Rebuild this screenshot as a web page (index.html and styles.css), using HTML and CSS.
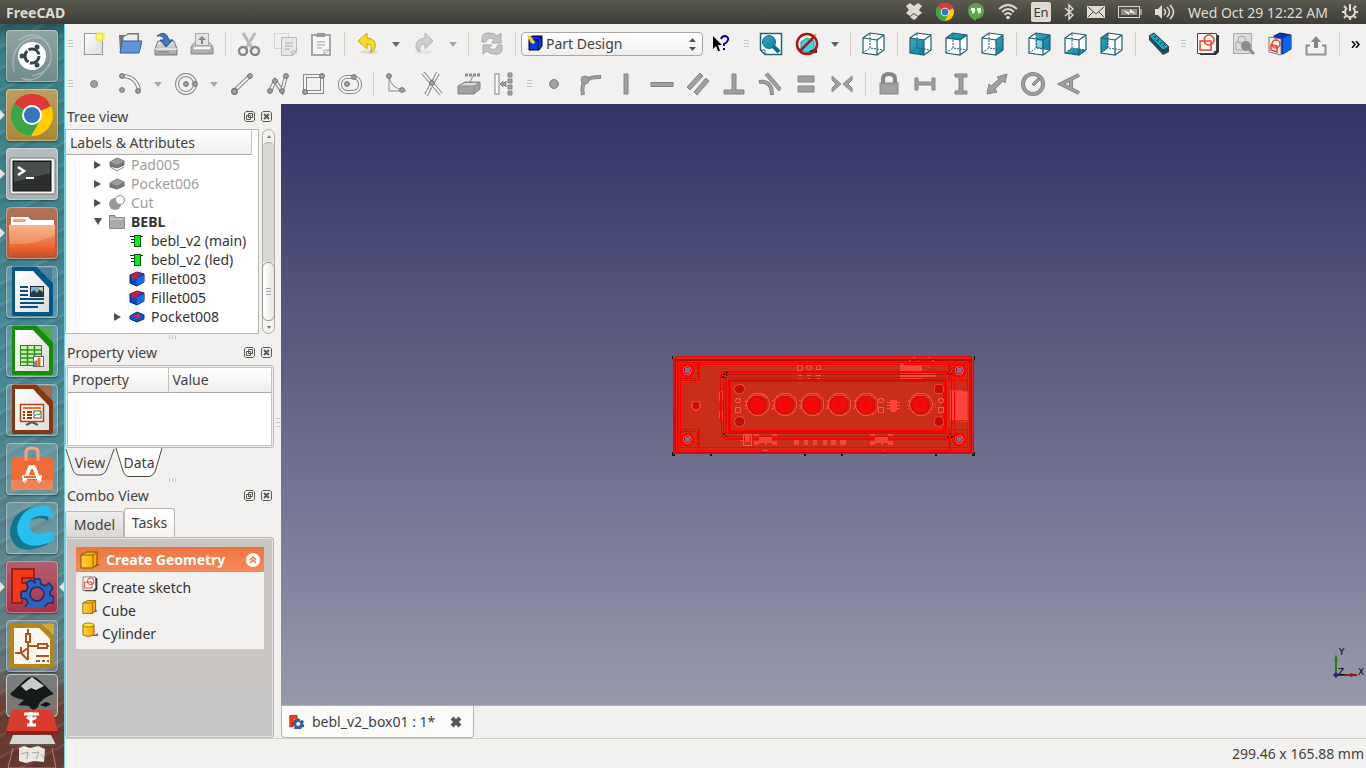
FILE: index.html
```html
<!DOCTYPE html>
<html lang="en">
<head>
<meta charset="utf-8">
<title>FreeCAD</title>
<link rel="stylesheet" href="styles.css">
</head>
<body>
<svg class="defs" aria-hidden="true">
  <defs>
    <linearGradient id="teal" x1="0" y1="0" x2="1" y2="1"><stop offset="0" stop-color="#3fa9c2"/><stop offset="1" stop-color="#067f9c"/></linearGradient>
    <linearGradient id="gold" x1="0" y1="0" x2="1" y2="0"><stop offset="0" stop-color="#ffd83a"/><stop offset="1" stop-color="#f5a300"/></linearGradient>
    <linearGradient id="orange" x1="0" y1="0" x2="0" y2="1"><stop offset="0" stop-color="#f9a878"/><stop offset="1" stop-color="#e2501b"/></linearGradient>
    <linearGradient id="paper" x1="0" y1="0" x2="1" y2="1"><stop offset="0" stop-color="#fff"/><stop offset="1" stop-color="#dcdcdc"/></linearGradient>
    <linearGradient id="drive" x1="0" y1="0" x2="0" y2="1"><stop offset="0" stop-color="#e8e8e8"/><stop offset="1" stop-color="#a2a2a2"/></linearGradient>
    <radialGradient id="ball"><stop offset="0" stop-color="#f00"/><stop offset=".7" stop-color="#f00d0d"/><stop offset="1" stop-color="#d50808"/></radialGradient>
    <symbol id="shell" viewBox="0 0 24 24"><path d="M1 6L8 1L22 3V18L15 23L1 21Z" fill="#fff"/></symbol>
    <symbol id="frame" viewBox="0 0 24 24"><path d="M1 6L15 8V23L1 21ZM8 1L22 3V18M1 6L8 1M15 8L22 3M15 23L22 18" fill="none" stroke="#1f6070" stroke-width="1.2"/><path d="M8 2V16L22 18M1 21L8 16" fill="none" stroke="#1f6070" stroke-dasharray="2 1"/></symbol>
    <symbol id="dot" viewBox="0 0 6 6"><circle cx="3" cy="3" r="2.4" fill="#a2a2a2" stroke="#6e6e6e"/></symbol>
    <symbol id="chrome" viewBox="0 0 42 42"><circle cx="21" cy="21" r="21" fill="#fc0"/><path d="M21 21L3 10A21 21 0 0 1 40 12Z" fill="#df3a35"/><path d="M3 10A21 21 0 0 0 20 42L30 25 21 21Z" fill="#3ba648"/><circle cx="21" cy="21" r="10" fill="#fff"/><circle cx="21" cy="21" r="8" fill="#3577bd"/></symbol>
    <symbol id="sketch" viewBox="0 0 24 24"><path d="M4 3H23V20L20 23H4Z" fill="#333"/><path d="M1.500 1.500H20.500V18L17 21.500H1.500Z" fill="#fff" stroke="#444"/><rect x="4" y="9" width="11" height="9" fill="none" stroke="#f43a20" stroke-width="1.500"/><circle cx="13" cy="8" r="5" fill="none" stroke="#f43a20" stroke-width="1.500"/></symbol>
    <symbol id="fc" viewBox="0 0 44 40"><path d="M2 2H24V11H12V16H20V24H12V36H2Z" fill="#f23b14" stroke="#8d170b" stroke-width="1.500"/><path fill-rule="evenodd" d="M24 12h6l1 5 4 2 4-3 4 5-3 4 0 3 4 2-1 6-5 0-3 3 1 5-6 1-3-4h-4l-4 3-4-4 3-4-2-4-5-1v-6l5-1 2-4-2-4 5-3 4 3ZM27 20A7 7 0 1 0 27 34A7 7 0 1 0 27 20Z" fill="#2d63bd" stroke="#12306e" stroke-width="1.500"/></symbol>
    <symbol id="float" viewBox="0 0 11 11"><path d="M2 .500H9L10.500 2V9L9 10.500H2L.500 9V2ZM4.500 2.500H8.500V6.500H4.500ZM2.500 4.500H6.500V8.500H2.500Z" fill="none" stroke="#5b5a57"/></symbol>
    <symbol id="shut" viewBox="0 0 11 11"><path d="M2 .500H9L10.500 2V9L9 10.500H2L.500 9V2Z" fill="none" stroke="#5b5a57"/><path d="M3 3L8 8M8 3L3 8" stroke="#5b5a57" stroke-width="2"/></symbol>
    <symbol id="box" viewBox="0 0 20 18"><path d="M12 17L20 14L16 12Z" fill="#666"/><path d="M1 4L7 1H17V13L13 17H1Z" fill="url(#gold)" stroke="#7c5500"/><path d="M1 4H13V17M13 4L17 1" fill="none" stroke="#8b6100"/></symbol>
    <symbol id="fillet" viewBox="0 0 16 16"><path d="M1 4L8 1L15 3V11L8 15L1 12Z" fill="#0647c8" stroke="#092064"/><path d="M8 7L15 4V11L8 15Z" fill="#1668ee"/><path d="M2 4L8 1L13 3Q8 4 8 8L2 7Z" fill="#d41d29"/></symbol>
    <symbol id="chip" viewBox="0 0 16 16"><path d="M1 3.500H6M2 6.500H6M2 9.500H6M10 3.500H14" stroke="#222"/><rect x="5.500" y="2.500" width="6" height="11" fill="#00f316" stroke="#174d18"/></symbol>
    <symbol id="slab" viewBox="0 0 16 16"><path d="M1 7L8 3L15 6V10L8 13L1 11Z" fill="#777" stroke="#6b6b6b"/><path d="M1 7L8 10L15 6L8 3Z" fill="#999"/></symbol>
    <symbol id="sheen" viewBox="0 0 52 52"><rect x=".500" y=".500" width="51" height="51" rx="4" fill="none" stroke="#fff" stroke-opacity=".35"/></symbol>
    <symbol id="doc" viewBox="0 0 52 52"><path d="M8 2H29L45 18V48H8Z" fill="currentColor" stroke="currentColor" stroke-width="4" stroke-linejoin="round"/><path d="M9 5H27L43 22V46H9Z" fill="url(#paper)"/><path d="M32 2H46V16Z" fill="currentColor"/><path d="M32 2H46V16Z" fill="#fff" opacity=".25"/></symbol>
    <symbol id="hole" viewBox="0 0 48 48"><circle cx="24" cy="24" r="18" fill="#be1b17" stroke="#f00" stroke-width="6"/><circle cx="24" cy="24" r="12" fill="none" stroke="#ff4b45" stroke-width="3"/><rect x="16" y="16" width="16" height="16" fill="#7570a0"/></symbol>
    <symbol id="led" viewBox="0 0 80 80"><circle cx="40" cy="40" r="34" fill="none" stroke="#ff4a42" stroke-width="3"/><path d="M18 12H62M16 18H64" stroke="#ff352e" stroke-width="3"/><circle cx="38" cy="42" r="28" fill="url(#ball)"/><path d="M0 28L5 32M0 42H5M0 55L5 50" stroke="#ff5650" stroke-width="3"/></symbol>
  </defs>
</svg>

<header class="panel">
  <span class="app-name">FreeCAD</span>
  <div class="tray">
    <svg class="i18" viewBox="0 0 18 18"><path d="M1 3L5 0L9 3L13 0L17 3L14 7L17 10L13 13L9 10L5 13L1 10L4 7Z M5 14L9 11L13 14L9 17Z" fill="#dfdbd2"/></svg>
    <svg class="i18"><use href="#chrome"/></svg>
    <svg class="i18" viewBox="0 0 18 18"><path d="M9 0A8 8 0 0 1 9 16L9 18Q1 14 1 8A8 8 0 0 1 9 0Z" fill="#58a846"/><path d="M4 5H8V9L5 11V8H4ZM10 5H14V9L11 11V8H10Z" fill="#fff"/></svg>
    <svg class="i20" viewBox="0 0 20 16"><path d="M1 5Q10-3 19 5M4 8Q10 2 16 8M6.500 11Q10 7 13.500 11" fill="none" stroke="#dfdbd2" stroke-width="1.800"/><circle cx="10" cy="13.500" r="1.800" fill="#dfdbd2"/></svg>
    <span class="lang">En</span>
    <svg class="i10" viewBox="0 0 10 18"><path d="M1 5L9 12L5 16V2L9 6L1 13" fill="none" stroke="#dfdbd2" stroke-width="1.500"/></svg>
    <svg class="i18" viewBox="0 0 18 12"><rect width="18" height="12" fill="#dfdbd2"/><path d="M1 1L9 8L17 1M1 11L6 6M17 11L12 6" fill="none" stroke="#4b4a45"/></svg>
    <svg class="i24" viewBox="0 0 24 12"><path d="M.500 .500H21.500V11.500H.500ZM23 3V9" fill="none" stroke="#dfdbd2"/><path d="M3 3H19V9H3Z" fill="#8f8d86"/><path d="M5 4L12 7L12 3L18 8L11 6L11 9Z" fill="#fff"/></svg>
    <svg class="i20" viewBox="0 0 20 16"><path d="M0 5H3L7 1V15L3 11H0Z" fill="#dfdbd2"/><path d="M9 5Q12 8 9 11M12 3Q17 8 12 13M15 1Q22 8 15 15" fill="none" stroke="#dfdbd2" stroke-width="1.500"/></svg>
    <time class="clock">Wed Oct 29 12:22 AM</time>
    <svg class="i18" viewBox="0 0 18 18"><path d="M9 1V8M9 14V17M1 9H4M14 9H17M3 3L5 5M15 3L13 5M3 15L5 13M15 15L13 13" stroke="#dfdbd2" stroke-width="2.200"/><path d="M6 5A5 5 0 1 0 12 5" fill="none" stroke="#dfdbd2" stroke-width="2"/></svg>
  </div>
</header>

<div class="desktop">
<nav class="launcher" aria-label="Launcher">
  <button class="tile dash" aria-label="Dash"><svg viewBox="0 0 52 52"><path d="M8 42Q3 16 25 8Q43 5 45 25Q46 42 26 46M15 48Q34 56 45 30M13 10Q31-2 42 15" fill="none" stroke="#c4d4d4" stroke-opacity=".5" stroke-width="1.500"/><circle cx="26" cy="26" r="14" fill="#fff"/><circle cx="26" cy="26" r="7" fill="none" stroke="#34464a" stroke-width="3" stroke-dasharray="13 1.600"/><circle cx="16" cy="26" r="2.500" fill="#34464a"/><circle cx="31" cy="17" r="2.500" fill="#34464a"/><circle cx="31" cy="35" r="2.500" fill="#34464a"/><use href="#sheen"/></svg></button>
  <button class="tile gold run" aria-label="Chrome"><svg viewBox="0 0 52 52"><use href="#chrome" x="5" y="5" width="42" height="42"/><use href="#sheen"/></svg></button>
  <button class="tile silver run" aria-label="Terminal"><svg viewBox="0 0 52 52"><rect x="4" y="10" width="45" height="36" rx="2" fill="#f3f3f3" stroke="#777"/><rect x="7" y="13" width="38" height="30" fill="#2d2f2f" stroke="#111"/><path d="M8 14H44V25L8 34Z" fill="#4b4e4e"/><path d="M12 19L18 23L12 27" fill="none" stroke="#fff" stroke-width="2.500"/><path d="M20 30H28" stroke="#fff" stroke-width="2"/><use href="#sheen"/></svg></button>
  <button class="tile rust run" aria-label="Files"><svg viewBox="0 0 52 52"><path d="M5 10H22L25 13H48V46H4Z" fill="#fff"/><rect x="7" y="12" width="13" height="3" fill="#f5a47b"/><path d="M3 18H49V44Q49 47 46 47H6Q3 47 3 44Z" fill="url(#orange)"/><path d="M3 18H49V28Q28 39 4 37Z" fill="#fbd1ab" opacity=".3"/><use href="#sheen"/></svg></button>
  <button class="tile writer" aria-label="Writer"><svg viewBox="0 0 52 52"><use href="#doc"/><path d="M14 21H22M14 25H22M14 29H22M14 33H38M14 37H38M14 41H32" stroke="#0a4f80" stroke-width="2"/><rect x="24.500" y="20.500" width="13" height="10" fill="#73b3d4" stroke="#234"/><path d="M25 30V27L28 24L31 27L34 23L38 28V30Z" fill="#263746"/><circle cx="35" cy="23" r="1.500" fill="#fd4"/><use href="#sheen"/></svg></button>
  <button class="tile calc" aria-label="Calc"><svg viewBox="0 0 52 52"><use href="#doc"/><rect x="14.500" y="20.500" width="21" height="20" fill="#c7f3ad" stroke="#238a14"/><path d="M14 25H36M14 29H36M14 33H36M14 37H36M21.500 20V41M28.500 20V41" stroke="#299018" stroke-width="1.500"/><rect x="27.500" y="31.500" width="10" height="10" fill="#fff" stroke="#666"/><path d="M29 41V36H31V41M32 41V33H34V41" fill="#ed6b23" stroke="#ed6b23"/><path d="M29 41V37" stroke="#28a4df" stroke-width="2"/><use href="#sheen"/></svg></button>
  <button class="tile impress" aria-label="Impress"><svg viewBox="0 0 52 52"><use href="#doc"/><path d="M20 41L26 38L32 41" fill="none" stroke="#555" stroke-width="2"/><rect x="14.500" y="20.500" width="23" height="17" fill="#fff2e8" stroke="#ad4411" stroke-width="1.500"/><path d="M17 24H35" stroke="#d8763e" stroke-width="2"/><path d="M17 28H19M17 31H19M17 34H19M21 28H26M21 31H26M21 34H26" stroke="#853910" stroke-width="2"/><rect x="28" y="27" width="7" height="7" fill="#fff" stroke="#555"/><path d="M29 32L31 30L33 31L35 28" fill="none" stroke="#2b9b3a"/><use href="#sheen"/></svg></button>
  <button class="tile store" aria-label="Software Center"><svg viewBox="0 0 52 52"><path d="M5 14H47V44Q47 47 44 47H8Q5 47 5 44Z" fill="#ee6b36"/><path d="M5 37H47V47H5Z" fill="#f28355"/><path d="M20 18V9Q20 5 26 5Q32 5 32 9V18" fill="none" stroke="#f9a27d" stroke-width="3"/><path d="M18 39L24 24H28L34 39M16 34H36" fill="none" stroke="#fff" stroke-width="3.500"/><path d="M18 34H30" stroke="#ee6b36" stroke-width="2"/><use href="#sheen"/></svg></button>
  <button class="tile" aria-label="Cura"><svg viewBox="0 0 52 52"><path d="M43 7Q23 0 9 15Q-1 30 9 43Q18 53 42 42L37 34Q22 38 19 30Q17 20 28 17Q36 14 42 19Z" fill="#12778d"/><path d="M44 5Q24 1 15 15Q7 28 16 39Q26 49 49 38L46 29Q30 36 25 28Q20 17 32 14Q40 12 48 17Z" fill="#25bff0"/><use href="#sheen"/></svg></button>
  <button class="tile crimson run active" aria-label="FreeCAD"><svg viewBox="0 0 52 52"><use href="#fc" x="4" y="6" width="44" height="40"/><use href="#sheen"/></svg></button>
  <button class="tile" aria-label="Schematic"><svg viewBox="0 0 52 52"><path d="M6 6H34L46 18V46H6Z" fill="#fbf8ef" stroke="#b58617" stroke-width="4"/><path d="M36 4H48V16Z" fill="#d6a826"/><path d="M22 9V40M15 33V27M22 28L15 33H9M15 33L22 40M22 26H43" fill="none" stroke="#b5521d" stroke-width="2"/><path d="M20 14H24V22H20ZM32 24H41V28H32Z" fill="#fff" stroke="#b5521d" stroke-width="2"/><path d="M30 36H43M30 41H34M36 41H39M41 41H43" stroke="#a55831" stroke-width="2"/><use href="#sheen"/></svg></button>
  <svg class="stack" viewBox="0 0 52 94" preserveAspectRatio="xMidYMin slice"><rect x=".500" y=".500" width="51" height="42" rx="4" fill="#7d8787" fill-opacity=".75" stroke="#c6cecb"/><path d="M4 20L20 5Q26 0 32 5L48 20Q34 24 32 33Q27 39 23 32L12 31L18 26Q8 24 4 20Z" fill="#16191a"/><path d="M15 12L26 3L38 12L30 16L25 14L20 17Z" fill="#c7cccc"/><path d="M34 31L40 28L45 30L40 33Z" fill="#111"/><path d="M6 36H46L52 57H0Z" fill="#d93b2d"/><path d="M0 57H52V60H0Z" fill="#a4170e"/><path d="M25 38V51M18 40H33M21 43Q26 47 30 43M21 51H30" fill="none" stroke="#fff" stroke-width="3"/><path d="M7 61H45L50 71H3Z" fill="#d4d4d0"/><path d="M3 70H50V72H3Z" fill="#555"/><path d="M13 74L18 72L24 74L32 72L39 75L38 88L28 87L20 89L13 87Z" fill="#e8e7e2"/><path d="M15 80L22 78L21 85M26 79L33 78L30 85M35 80L38 84" fill="none" stroke="#a9a5a0"/><path d="M7 74L2 94H50L46 74" fill="none" stroke="#cfb7ac" stroke-opacity=".6"/></svg>
</nav>

<main class="window">
  <div class="toolbars">
    <div class="toolbar file-bar">
      <i class="grip"></i>
      <button class="tool" aria-label="New"><svg viewBox="0 0 24 24"><rect x="2.500" y="1.500" width="18" height="21" fill="url(#paper)" stroke="#999"/><circle cx="18" cy="5" r="5" fill="#f9ec29" opacity=".8"/><circle cx="18" cy="5" r="2" fill="#ffc"/></svg></button>
      <button class="tool" aria-label="Open"><svg viewBox="0 0 24 24"><path d="M2 20L1 3H8L10 1H21V20Z" fill="#777"/><path d="M5 5L10 2H20V16H5Z" fill="#eee" stroke="#777"/><path d="M4 9H24L21 21H2Z" fill="#5f93d1" stroke="#2960a5"/></svg></button>
      <button class="tool" aria-label="Save"><svg viewBox="0 0 24 24"><path d="M4 9H20L23 17V23H1V17Z" fill="url(#drive)" stroke="#777"/><path d="M1 17H23" stroke="#fff"/><path d="M3 20H15" stroke="#777"/><path d="M3 4Q12-3 15 8H19L12 15L6 8H10Q9 3 3 4Z" fill="#4278bb" stroke="#285a9b"/></svg></button>
      <button class="tool" aria-label="Print"><svg viewBox="0 0 24 24"><path d="M4 11H20L23 15V22H1V15Z" fill="url(#drive)" stroke="#8a8a8a"/><rect x="5.500" y="1.500" width="13" height="12" fill="#e4e4e4" stroke="#aaa"/><path d="M12 4L16 8H13V12H11V8H8Z" fill="#888"/><path d="M3 14H21V18H3Z" fill="#f5f5f5" stroke="#999"/></svg></button>
      <i class="sep"></i>
      <button class="tool" aria-label="Cut"><svg viewBox="0 0 24 24"><path d="M6 1L15 16M18 1L9 16" stroke="#b9b9b9" stroke-width="3"/><circle cx="6" cy="19" r="4" fill="none" stroke="#888" stroke-width="2.500"/><circle cx="18" cy="19" r="4" fill="none" stroke="#888" stroke-width="2.500"/></svg></button>
      <button class="tool" aria-label="Copy"><svg viewBox="0 0 24 24"><rect x="1.500" y="1.500" width="14" height="15" fill="#f2f1ef" stroke="#d4d4d4"/><path d="M8.500 5.500H23.500V20L20 23.500H8.500Z" fill="#e9e8e6" stroke="#bbb"/><path d="M12 11H20M12 14H20M12 17H17" stroke="#ccc" stroke-width="2"/><path d="M19 23V19H23Z" fill="#fff" stroke="#aaa"/></svg></button>
      <button class="tool" aria-label="Paste"><svg viewBox="0 0 24 24"><rect x="3" y="3" width="18" height="20" fill="#f7f7f7" stroke="#a5a5a5" stroke-width="2"/><path d="M8 10H16M8 13H16M8 16H13" stroke="#ccc" stroke-width="2"/><path d="M15 22V18H20Z" fill="#fff" stroke="#aaa"/><path d="M8 1H16V5H7Z" fill="#999"/></svg></button>
      <i class="sep"></i>
      <button class="tool" aria-label="Undo"><svg viewBox="0 0 24 24"><ellipse cx="13" cy="20" rx="9" ry="2" fill="#ddd"/><path d="M11 1V6Q21 7 19 16Q18 19 14 21Q18 12 11 12V17L2 9Z" fill="#f9da1e" stroke="#c9a31b"/></svg></button>
      <button class="drop on" aria-label="Undo list"></button>
      <button class="tool" aria-label="Redo"><svg viewBox="0 0 24 24"><ellipse cx="11" cy="20" rx="9" ry="2" fill="#e3e3e3"/><path d="M13 1V6Q3 7 4 16Q5 19 8 20Q6 12 13 12V17L21 9Z" fill="#cfcfcf" stroke="#b5b5b5"/></svg></button>
      <button class="drop" aria-label="Redo list"></button>
      <i class="sep"></i>
      <button class="tool" aria-label="Refresh"><svg viewBox="0 0 24 24"><path d="M2 10V6Q2 1 9 1Q15 1 17 4L21 1V11H12L14 7Q8 4 6 10ZM22 13V18Q21 23 14 22Q9 22 7 19L3 22V13H12L9 16Q15 20 18 13Z" fill="#c4c4c4" stroke="#aaa"/></svg></button>
      <i class="sep"></i>
      <div class="bench"><label class="hide" for="bench">Workbench</label><select id="bench"><option>Part Design</option></select>
        <svg class="bench-icon" viewBox="0 0 16 16"><path d="M2 4L5 1H15V11L12 15H2Z" fill="#0634f0" stroke="#000"/><path d="M11 5H2M11 5V15M11 5L15 1" stroke="#012" fill="none"/><path d="M0 1L3 0L8 7L7 9L4 8Z" fill="#f2ce2e"/></svg>
        <svg class="spin" viewBox="0 0 7 13"><path d="M0 4L3.500 0L7 4ZM0 9H7L3.500 13Z" fill="#555"/></svg></div>
      <button class="tool" aria-label="What's this"><svg viewBox="0 0 24 24"><path d="M3 4V17L6 14L8 19H10L8 13H12Z" fill="#000"/><path d="M11 7Q12 4 15 4Q19 5 18 8Q17 11 14 12V14M14 16V18" fill="none" stroke="#00008b" stroke-width="2"/></svg></button>
      <i class="grip"></i>
      <button class="tool" aria-label="Fit all"><svg viewBox="0 0 24 24"><path d="M1.500 1.500H22.500V22.500H6L1.500 18Z" fill="#fff" stroke="#236473" stroke-width="1.500"/><path d="M2 18H6V22" fill="none" stroke="#236473"/><circle cx="10" cy="10" r="6.500" fill="url(#teal)" stroke="#087086"/><path d="M14 14L20 20" stroke="#087086" stroke-width="4"/></svg></button>
      <button class="tool" aria-label="Draw style"><svg viewBox="0 0 24 24"><path d="M6 10L12 6L19 9V17L12 21L6 18Z" fill="#35d9df" stroke="#2392a2"/><path d="M14 19L22 16V21H15Z" fill="#333"/><path d="M12 12L21 2" stroke="#dab43a" stroke-width="2"/><circle cx="12" cy="12" r="10" fill="none" stroke="#b11318" stroke-width="2.500"/><path d="M5 19L19 5" stroke="#b11318" stroke-width="2.500"/></svg></button>
      <button class="drop on" aria-label="Draw styles"></button>
      <i class="sep"></i>
      <button class="tool" aria-label="Axonometric"><svg viewBox="0 0 24 24"><use href="#shell"/><use href="#frame"/></svg></button>
      <i class="sep"></i>
      <button class="tool" aria-label="Front"><svg viewBox="0 0 24 24"><use href="#shell"/><path d="M1 6L15 8V23L1 21Z" fill="url(#teal)"/><use href="#frame"/></svg></button>
      <button class="tool" aria-label="Top"><svg viewBox="0 0 24 24"><use href="#shell"/><path d="M1 6L15 8L22 3L8 1Z" fill="url(#teal)"/><use href="#frame"/></svg></button>
      <button class="tool" aria-label="Right"><svg viewBox="0 0 24 24"><use href="#shell"/><path d="M15 8L22 3V18L15 23Z" fill="url(#teal)"/><use href="#frame"/></svg></button>
      <i class="sep"></i>
      <button class="tool" aria-label="Rear"><svg viewBox="0 0 24 24"><use href="#shell"/><path d="M8 1L22 3V18L8 16Z" fill="url(#teal)"/><path d="M9 8L14 9V16L9 15Z" fill="#fff" opacity=".5"/><use href="#frame"/></svg></button>
      <button class="tool" aria-label="Bottom"><svg viewBox="0 0 24 24"><use href="#shell"/><path d="M1 21L8 16L22 18L15 23Z" fill="url(#teal)"/><use href="#frame"/></svg></button>
      <button class="tool" aria-label="Left"><svg viewBox="0 0 24 24"><use href="#shell"/><path d="M1 6L8 1V16L1 21Z" fill="url(#teal)"/><use href="#frame"/></svg></button>
      <i class="sep"></i>
      <button class="tool" aria-label="Measure"><svg viewBox="0 0 24 24"><path d="M2 4L7 1L22 15V20L16 23L2 8Z" fill="#294a54"/><path d="M2 4L7 1L22 15L16 18Z" fill="#239db8" stroke="#174a58"/><path d="M9 4L7 6M12 7L10 9M15 10L13 12M18 12L16 14" stroke="#0b2c36"/></svg></button>
      <i class="grip"></i>
      <button class="tool" aria-label="New sketch"><svg><use href="#sketch"/></svg></button>
      <button class="tool" aria-label="View sketch"><svg viewBox="0 0 24 24"><path d="M1.500 1.500H19.500V21.500H1.500Z" fill="#ddd" stroke="#aaa"/><path d="M4 10H14V18H4Z" fill="none" stroke="#aaa"/><circle cx="10" cy="8" r="4" fill="none" stroke="#aaa"/><circle cx="14" cy="14" r="5" fill="#8b8b8b"/><path d="M17 17L22 22" stroke="#8b8b8b" stroke-width="3"/></svg></button>
      <button class="tool" aria-label="Map sketch"><svg viewBox="0 0 24 24"><path d="M6 4L12 1L23 3V17L15 22L6 20Z" fill="#0737b8" stroke="#081a58"/><path d="M15 6L23 3V17L15 22Z" fill="#0863ed"/><path d="M1 5L13 7V23L1 20Z" fill="#eee" stroke="#777"/><path d="M3 13L9 14V20L3 18Z" fill="none" stroke="#e9432c" stroke-width="1.500"/><circle cx="8" cy="12" r="4" fill="none" stroke="#e9432c" stroke-width="1.500"/></svg></button>
      <button class="tool" aria-label="Leave sketch"><svg viewBox="0 0 24 24"><path d="M6 13.500H2.500V22.500H21.500V13.500H18" fill="none" stroke="#949494" stroke-width="2"/><path d="M12 4L17 10H14V16H10V10H7Z" fill="#858585"/></svg></button>
      <i class="sep"></i>
      <button class="more" aria-label="More tools"><svg viewBox="0 0 9 7"><path d="M1 0L4 3.500L1 7M5 0L8 3.500L5 7" fill="none" stroke="#000" stroke-width="1.500"/></svg></button>
    </div>
    <div class="toolbar grey">
      <i class="grip"></i>
      <button class="tool" aria-label="Point"><svg viewBox="0 0 24 24"><circle cx="12" cy="12" r="3.500"/></svg></button>
      <button class="tool" aria-label="Arc"><svg viewBox="0 0 24 24"><path d="M4 4Q18 4 21 18" class="tube"/><path d="M4 4Q18 4 21 18" class="core"/><use href="#dot" x="1" y="1" width="6" height="6"/><use href="#dot" x="1" y="15" width="6" height="6"/><use href="#dot" x="17" y="16" width="6" height="6"/></svg></button>
      <button class="drop" aria-label="Arcs"></button>
      <button class="tool" aria-label="Circle"><svg viewBox="0 0 24 24"><circle cx="12" cy="12" r="9" class="tube"/><circle cx="12" cy="12" r="9" class="core"/><use href="#dot" x="9" y="9" width="6" height="6"/><use href="#dot" x="18" y="9" width="6" height="6"/></svg></button>
      <button class="drop" aria-label="Conics"></button>
      <button class="tool" aria-label="Line"><svg viewBox="0 0 24 24"><path d="M4 19L20 4" class="tube"/><path d="M4 19L20 4" class="core"/><use href="#dot" x="1" y="16" width="7" height="7"/><use href="#dot" x="17" y="1" width="6" height="6"/></svg></button>
      <button class="tool" aria-label="Polyline"><svg viewBox="0 0 24 24"><path d="M4 19L9 9L16 19L20 4" class="tube"/><path d="M4 19L9 9L16 19L20 4" class="core"/><use href="#dot" x="1" y="16" width="6" height="6"/><use href="#dot" x="6" y="6" width="6" height="6"/><use href="#dot" x="13" y="16" width="6" height="6"/><use href="#dot" x="17" y="1" width="6" height="6"/></svg></button>
      <button class="tool" aria-label="Rectangle"><svg viewBox="0 0 24 24"><path d="M3 4H20V20H3Z" class="tube"/><path d="M3 4H20V20H3Z" class="core"/><use href="#dot" x="17" y="1" width="6" height="6"/><use href="#dot" x="0" y="17" width="6" height="6"/></svg></button>
      <button class="tool" aria-label="Slot"><svg viewBox="0 0 24 24"><rect x="2" y="5" width="20" height="15" rx="7" class="tube"/><rect x="2" y="5" width="20" height="15" rx="7" class="core"/><use href="#dot" x="6" y="9" width="6" height="6"/><use href="#dot" x="13" y="2" width="6" height="6"/></svg></button>
      <i class="sep"></i>
      <button class="tool" aria-label="Fillet"><svg viewBox="0 0 24 24"><path d="M4 3V19H21M4 4Q6 17 19 18" class="wire"/><use href="#dot" x="1" y="1" width="6" height="6"/><use href="#dot" x="14" y="15" width="6" height="6"/></svg></button>
      <button class="tool" aria-label="Trim"><svg viewBox="0 0 24 24"><path d="M2 1L20 22M17 1L5 23" class="tube"/><path d="M2 1L20 22M17 1L5 23" class="core"/><use href="#dot" x="8" y="8" width="6" height="6"/></svg></button>
      <button class="tool" aria-label="External geometry"><svg viewBox="0 0 24 24"><path d="M1 14L8 10H23V17L17 22H1Z"/><path d="M2 14L8 11H21L17 14Z" fill="#ddd" stroke="none"/><path d="M1 14H17L23 10M17 14V22M13 10L16 4" class="wire"/><path d="M8 3H24" class="beads"/></svg></button>
      <button class="tool" aria-label="Construction mode"><svg viewBox="0 0 24 24"><rect x="2" y="2" width="4" height="20" fill="#fff"/><path d="M15 1H19V5H15ZM15 7H19V11H15ZM15 13H19V17H15ZM15 19H19V23H15ZM7 12L10 9V15ZM13 9L10 12L13 15Z"/></svg></button>
      <i class="grip"></i>
      <button class="tool" aria-label="Coincident"><svg viewBox="0 0 24 24"><circle cx="12" cy="12" r="4.500"/></svg></button>
      <button class="tool" aria-label="Point on object"><svg viewBox="0 0 24 24"><path d="M5 23Q1 4 23 5" class="thick"/><path d="M5 22Q2 5 22 5" class="fill"/><circle cx="7" cy="8" r="4"/></svg></button>
      <button class="tool" aria-label="Vertical"><svg viewBox="0 0 24 24"><rect x="10" y="2" width="4" height="20"/></svg></button>
      <button class="tool" aria-label="Horizontal"><svg viewBox="0 0 24 24"><rect x="1" y="10.500" width="22" height="4"/></svg></button>
      <button class="tool" aria-label="Parallel"><svg viewBox="0 0 24 24"><path d="M1 15L14 1L17 4L4 18ZM8 20L20 6L23 9L11 23Z"/></svg></button>
      <button class="tool" aria-label="Perpendicular"><svg viewBox="0 0 24 24"><path d="M10 2H14V18H22V22H2V18H10Z"/></svg></button>
      <button class="tool" aria-label="Tangent"><svg viewBox="0 0 24 24"><path d="M1 10Q14 8 14 23" class="thick"/><path d="M2 10Q14 8 14 22" class="fill"/><path d="M7 3L10 1L23 16L21 19Z"/></svg></button>
      <button class="tool" aria-label="Equal"><svg viewBox="0 0 24 24"><path d="M4 4H20V10H4ZM4 14H20V20H4Z"/></svg></button>
      <button class="tool" aria-label="Symmetric"><svg viewBox="0 0 24 24"><path d="M2 4L11 12L2 20V16L6 12L2 8ZM22 4L13 12L22 20V16L18 12L22 8Z"/></svg></button>
      <i class="sep"></i>
      <button class="tool" aria-label="Lock"><svg viewBox="0 0 24 24"><path d="M6 12V7Q6 2 12 2Q18 2 18 7V12" class="thick"/><rect x="3" y="11" width="18" height="11"/></svg></button>
      <button class="tool" aria-label="Horizontal distance"><svg viewBox="0 0 24 24"><path d="M2 6H5V10H19V6H22V18H19V13H5V18H2Z"/></svg></button>
      <button class="tool" aria-label="Vertical distance"><svg viewBox="0 0 24 24"><path d="M6 2H18V5H14V19H18V22H6V19H10V5H6Z"/></svg></button>
      <button class="tool" aria-label="Length"><svg viewBox="0 0 24 24"><path d="M22 2L20 11L18 9L10 17L12 20L2 22L4 12L6 14L14 7L12 5Z"/></svg></button>
      <button class="tool" aria-label="Radius"><svg viewBox="0 0 24 24"><circle cx="12" cy="12" r="10" class="thick"/><circle cx="12" cy="12" r="10" class="fill"/><path d="M11 12L17 6L19 8L13 14Z"/></svg></button>
      <button class="tool" aria-label="Angle"><svg viewBox="0 0 24 24"><path d="M22 3L4 12L22 21M14 7V17" class="thick"/><path d="M22 3L4 12L22 21M14 7V17" class="fill"/></svg></button>
    </div>
  </div>

  <div class="workspace">
    <aside class="docks">
      <section>
        <h2 class="dock-title">Tree view<span><button aria-label="Float"><svg><use href="#float"/></svg></button><button aria-label="Close"><svg><use href="#shut"/></svg></button></span></h2>
        <div class="tree-wrap">
          <div class="tree">
            <div class="col-head">Labels &amp; Attributes</div>
            <ul>
              <li class="off"><button class="twist" aria-label="Expand"></button><svg viewBox="0 0 16 16"><path d="M1 10L8 14L15 10" fill="#fff" stroke="#888"/><path d="M1 5L8 1L15 4V8L8 11L1 9Z" fill="#777" stroke="#666"/><path d="M1 5L8 8L15 4L8 1Z" fill="#999"/></svg>Pad005</li>
              <li class="off"><button class="twist" aria-label="Expand"></button><svg><use href="#slab"/></svg>Pocket006</li>
              <li class="off"><button class="twist" aria-label="Expand"></button><svg viewBox="0 0 16 16"><circle cx="6" cy="9" r="6" fill="#999"/><circle cx="11" cy="5" r="4.500" fill="#fff" stroke="#888"/></svg>Cut</li>
              <li class="bold"><button class="twist open" aria-label="Collapse"></button><svg viewBox="0 0 16 16"><path d="M.500 1.500H6L7 3.500H15.500V14.500H.500Z" fill="#aaa" stroke="#888"/><path d="M1 5H15" stroke="#ddd"/></svg>BEBL</li>
              <li class="child"><svg><use href="#chip"/></svg>bebl_v2 (main)</li>
              <li class="child"><svg><use href="#chip"/></svg>bebl_v2 (led)</li>
              <li class="child"><svg><use href="#fillet"/></svg>Fillet003</li>
              <li class="child"><svg><use href="#fillet"/></svg>Fillet005</li>
              <li class="sub"><button class="twist" aria-label="Expand"></button><svg viewBox="0 0 16 16"><path d="M1 7L8 3L15 6V10L8 13L1 10Z" fill="#1253c4" stroke="#0b2d80"/><path d="M4 7L9 5L12 7L8 9Z" fill="#f02222"/></svg>Pocket008</li>
            </ul>
          </div>
          <div class="scroll"><i class="up"></i><i class="track"></i><i class="thumb"></i><i class="down"></i></div>
        </div>
      </section>
      <div class="splitter"></div>
      <section>
        <h2 class="dock-title">Property view<span><button aria-label="Float"><svg><use href="#float"/></svg></button><button aria-label="Close"><svg><use href="#shut"/></svg></button></span></h2>
        <div class="props"><div class="props-body"><table><thead><tr><th>Property</th><th>Value</th></tr></thead></table></div></div>
        <div class="slant-tabs">
          <button><svg viewBox="0 0 50 29"><path d="M0 1L7 22Q9 28 14 28H36Q40 27 42 23L50 1" fill="none" stroke="#4a4a48"/></svg><span>View</span></button>
          <button class="front"><svg viewBox="0 0 48 29"><path d="M1 0L8 23Q10 29 15 28.500H34Q38 28 40 24L47 0" fill="#fff" stroke="#4a4a48"/></svg><span>Data</span></button>
        </div>
      </section>
      <div class="splitter"></div>
      <section class="combo">
        <h2 class="dock-title">Combo View<span><button aria-label="Float"><svg><use href="#float"/></svg></button><button aria-label="Close"><svg><use href="#shut"/></svg></button></span></h2>
        <div class="tabs"><button>Model</button><button class="current">Tasks</button></div>
        <div class="tasks">
          <div class="task-head"><svg class="i20"><use href="#box"/></svg>Create Geometry<button aria-label="Collapse"><svg viewBox="0 0 14 14"><circle cx="7" cy="7" r="7" fill="#fff"/><path d="M4 7L7 4L10 7M4 10L7 7L10 10" fill="none" stroke="#ec6a38" stroke-width="1.300"/></svg></button></div>
          <ul>
            <li><a href="#"><svg><use href="#sketch"/></svg>Create sketch</a></li>
            <li><a href="#"><svg><use href="#box"/></svg>Cube</a></li>
            <li><a href="#"><svg viewBox="0 0 16 16"><path d="M10 14L16 11V14Z" fill="#777"/><path d="M1 3V13Q6 16 12 13V3Z" fill="url(#gold)" stroke="#9b6c00"/><ellipse cx="6.500" cy="3" rx="5.500" ry="2" fill="#ffe52d" stroke="#a47b00"/></svg>Cylinder</a></li>
          </ul>
        </div>
      </section>
    </aside>

    <section class="mdi">
      <div class="view3d">
        <svg class="model" viewBox="36 28 909 303" shape-rendering="crispEdges" role="img" aria-label="bebl_v2 box">
          <path d="M36 30h12v9h-12zM933 30h12v12h-12zM36 318h9v12h-9zM936 318h9v12h-9zM150 326h6v4h-6zM432 326h6v4h-6zM543 326h6v4h-6zM825 326h6v4h-6z" fill="#111"/>
          <rect x="41" y="33" width="899" height="291" fill="#c92f18" stroke="#f00" stroke-width="5"/>
          <path d="M46 43H936M49 320H933M46 38V320M934 38V320" stroke="#b50b08" stroke-width="5"/>
          <path d="M52 49H930V315H52ZM61 55H921V306H61Z" fill="none" stroke="#f00" stroke-width="3"/>
          <path d="M53 46V319M929 46V319" stroke="#f00" stroke-width="6"/>
          <path d="M57 104H116V49M57 251H116V311M924 104H866V49M924 251H866V311" fill="none" stroke="#f00" stroke-width="5"/>
          <path d="M62 99H108M112 52V95M62 258H106M112 262V303M870 55V92M870 262V310" stroke="#a61811" stroke-width="3" stroke-dasharray="9 4"/>
          <path d="M720 52H733V58H786V101H720ZM786 82H828V93H786ZM870 137H922V222H870ZM178 140L184 136H192V165H178ZM178 196L192 190V222H184L178 216ZM690 166L694 162H707L711 166V195L707 199H694L690 195Z" fill="#ff4541"/>
          <path d="M182 91L194 79H866L884 92V267L870 280H196L184 267ZM198 95H860V264H198Z" fill="none" stroke="#f00" stroke-width="4"/>
          <path d="M190 94L196 87H862L874 94V266L864 273H198L190 265Z" fill="none" stroke="#b51a10" stroke-width="3"/>
          <path d="M206 102H856V259H206Z" fill="none" stroke="#d21009" stroke-width="6"/>
          <path d="M212 108H852V254H212Z" fill="none" stroke="#f00" stroke-width="4"/>
          <path d="M184 96L198 80H204M190 98L201 87M190 262L203 276M862 82H874V92M862 276H872L880 268" fill="none" stroke="#300" stroke-width="3" stroke-dasharray="6 5"/>
          <path d="M871 134H910M910 137H922V228H888V222M785 59H804V66" fill="none" stroke="#ff302b" stroke-width="3"/>
          <use href="#hole" x="58" y="51" width="48" height="48"/><use href="#hole" x="874" y="51" width="48" height="48"/><use href="#hole" x="58" y="258" width="48" height="48"/><use href="#hole" x="874" y="258" width="48" height="48"/>
          <g fill="#b91109" stroke="#fa3830" stroke-width="3"><circle cx="239" cy="130" r="15"/><circle cx="239" cy="228" r="15"/><circle cx="837" cy="130" r="15"/><circle cx="837" cy="228" r="15"/><circle cx="108" cy="180" r="13" stroke-width="5"/></g>
          <use href="#led" x="254" y="136" width="80" height="80"/><use href="#led" x="336" y="136" width="80" height="80"/><use href="#led" x="418" y="136" width="80" height="80"/><use href="#led" x="499" y="136" width="80" height="80"/><use href="#led" x="580" y="136" width="80" height="80"/><use href="#led" x="743" y="136" width="80" height="80"/>
          <g fill="none" stroke="#ff514a" stroke-width="3"><path d="M413 59H427V73H413ZM227 186H241V200H227ZM656 186H670V200H656ZM836 186H850V200H836ZM250 266H273V298H250ZM240 283H250"/><circle cx="447" cy="66" r="7"/><circle cx="476" cy="66" r="7"/><circle cx="234" cy="165" r="7"/><circle cx="663" cy="165" r="7"/><circle cx="843" cy="165" r="7"/><path d="M413 90H427M440 90H454M469 90H483M416 98H424M443 98H450M472 98H480M682 169H690M682 179H690M682 189H690M712 169H721M712 179H721M712 189H721M824 175H829M824 184H829M306 314H324M669 314H672"/></g>
          <path d="M282 264H298V274H337V264H351V270H337V286H351V297H337V291H322V297H314V291H296V297H282V286H296V270H282ZM630 264H646V274H685V264H699V270H685V286H699V297H685V291H670V297H662V291H644V297H630V286H644V270H630ZM402 282H417V297H402ZM432 282H444V297H432ZM460 282H472V297H460ZM488 282H500V297H488ZM514 282H527V297H514ZM540 282H558V297H540ZM256 264H269V290H256ZM760 34H767V38H760ZM748 42H754V45H748ZM773 42H778V45H773ZM804 34H810V38H804ZM816 42H823V45H816Z" fill="#f94a42" opacity=".85"/>
          <path d="M39 31h5v5h-5zM937 31h4v5h-4z" fill="#16a000"/>
        </svg>
        <svg class="axes" viewBox="0 0 36 34"><path d="M6 29V10" stroke="#1c861c" stroke-width="2"/><path d="M4 15L6 8L8 15Z" fill="#1c861c"/><path d="M6 29H27" stroke="#862020" stroke-width="2"/><path d="M20 27L27 29L20 31Z" fill="#862020"/><path d="M6 26L9 29L6 32L3 29Z" fill="#202090"/><text x="9" y="9">Y</text><text x="8" y="29">Z</text><text x="28" y="29">X</text></svg>
      </div>
      <div class="mdi-tabs"><div class="mdi-tab"><svg class="doc-icon"><use href="#fc"/></svg>bebl_v2_box01 : 1*<button aria-label="Close document"><svg viewBox="0 0 12 12"><path d="M2 2L10 10M10 2L2 10" stroke="#555" stroke-width="4"/></svg></button></div></div>
    </section>
  </div>
  <footer class="status">299.46 x 165.88 mm</footer>
</main>
</div>
</body>
</html>
```
FILE: styles.css
```css
* { box-sizing: border-box; }
body { margin: 0; height: 100vh; display: flex; flex-direction: column; overflow: hidden; background: #f2f1ef; color: #434240; font: 14px/19px "Noto Sans", "Open Sans", sans-serif; }
button { margin: 0; padding: 0; border: 0; background: none; color: inherit; font: inherit; }
ul { list-style: none; margin: 0; padding: 0; }
svg { display: block; flex: none; }
.defs { position: absolute; width: 0; height: 0; }
.hide { position: absolute; width: 1px; height: 1px; overflow: hidden; clip-path: inset(50%); }

.panel { flex: none; height: 24px; padding: 0 7px 0 6px; display: flex; justify-content: space-between; align-items: center; color: #dfdbd2; background: linear-gradient(#5b5a4f, #3d3c38); }
.app-name { font-weight: bold; }
.tray { display: flex; align-items: center; gap: 13px; }
.i10 { width: 10px; height: 18px; }
.i18 { width: 18px; height: 18px; }
.i20 { width: 20px; height: 18px; }
.i24 { width: 24px; height: 18px; }
.lang { width: 20px; height: 20px; border-radius: 2px; background: #dfdbd2; color: #3d3c38; font-size: 13px; line-height: 20px; text-align: center; }

.desktop { flex: 1; min-height: 0; display: flex; }
.launcher { flex: none; width: 65px; padding: 6px 0 0 6px; display: flex; flex-direction: column; gap: 7px; overflow: hidden; border-right: 1px solid #67d3e2; background: repeating-linear-gradient(152deg, #ffffff12 0 2px, #00000010 4px 7px, transparent 9px 19px), linear-gradient(#26595f 0, #3b8087 18px, #468896 45%, #5d858b 75%, #64777a 640px, #6f4035 680px, #65392f); }
.tile { position: relative; flex: none; width: 52px; height: 52px; border-radius: 4px; background: #c0d2d638; box-shadow: 0 1px 2px #0006; }
.tile svg { width: 52px; height: 52px; }
.dash { background: linear-gradient(#8fa3a4, #718b8c); }
.gold { background: linear-gradient(#bd9e60, #a98735); }
.silver { background: linear-gradient(#b3bcc0, #aab1b2); }
.rust { background: linear-gradient(#b2745a, #b3573a); }
.crimson { background: linear-gradient(#b06070, #a83247); }
.writer { color: #075587; }
.calc { color: #168c08; }
.impress { color: #87370f; }
.run::before, .active::after { content: ""; position: absolute; top: 21px; border: 5px solid transparent; }
.run::before { left: -6px; border-left-color: #e3e3df; border-right: 0; }
.active::after { right: -6px; border-right-color: #e3e3df; border-left: 0; }
.stack { width: 52px; flex: 1; min-height: 0; margin-top: -5px; }

.window { flex: 1; min-width: 0; display: flex; flex-direction: column; }
.toolbar { height: 40px; display: flex; align-items: center; }
.tool { flex: none; width: 36px; height: 36px; display: grid; place-items: center; }
.tool svg { width: 24px; height: 24px; }
.grip { flex: none; width: 13px; height: 8px; background: repeating-linear-gradient(#c8c7c4 0 1px, transparent 1px 3px) center / 5px 8px no-repeat; }
.grip:first-child { width: 11px; }
.sep { flex: none; width: 11px; height: 24px; background: linear-gradient(#d3d2cf, #d3d2cf) center / 1px 24px no-repeat; }
.drop { flex: none; width: 20px; height: 36px; display: grid; place-items: center; }
.file-bar .drop:not(.on) { width: 21px; }
.drop::before { content: ""; border: 4px solid transparent; border-top: 5px solid #aaa; border-bottom: 0; }
.drop.on::before { border-top-color: #666; }
.more { flex: 1; height: 36px; display: grid; place-items: center; }
.more svg { width: 9px; height: 7px; }
.bench { position: relative; width: 183px; }
.bench select { display: block; width: 182px; height: 24px; padding: 0 20px 0 24px; appearance: none; border: 1px solid #a9a7a3; border-radius: 4px; background: linear-gradient(#fff, #f0efed); color: #434240; font: inherit; line-height: 22px; }
.bench-icon { position: absolute; left: 6px; top: 3px; width: 16px; height: 16px; pointer-events: none; }
.spin { position: absolute; right: 8px; top: 6px; width: 7px; height: 13px; pointer-events: none; }
.grey svg { fill: #a0a0a0; stroke: #858585; }
.grey .tube { fill: none; stroke: #888; stroke-width: 4; }
.grey .core { fill: none; stroke: #f4f4f4; stroke-width: 2; }
.grey .wire { fill: none; stroke: #8c8c8c; stroke-width: 1; }
.grey .beads { fill: none; stroke: #8c8c8c; stroke-width: 3; stroke-dasharray: 3 1; }
.grey .thick { fill: none; stroke: #858585; stroke-width: 4; }
.grey .fill { fill: none; stroke: #a0a0a0; stroke-width: 2; }

.workspace { flex: 1; min-height: 0; display: flex; }
.docks { flex: none; width: 216px; display: flex; flex-direction: column; background: repeating-linear-gradient(#c8c7c4 0 1px, transparent 1px 4px) 211px 314px / 4px 9px no-repeat; }
.dock-title { margin: 0; height: 25px; padding: 0 9px 0 2px; display: flex; align-items: center; justify-content: space-between; font: inherit; }
.dock-title span { display: flex; gap: 6px; }
.dock-title svg { width: 11px; height: 11px; }
.tree-wrap { display: flex; gap: 3px; }
.tree { width: 194px; border: 1px solid #b9b7b3; background: #fff; }
.col-head { height: 25px; margin-right: 6px; padding: 3px 4px; border-right: 1px solid #c5c3bf; border-bottom: 1px solid #aaa8a4; background: linear-gradient(#fff, #efeeec); }
.tree ul { padding-bottom: 7px; }
.tree li { height: 19px; padding-left: 28px; display: flex; align-items: center; color: #333; }
.tree li svg { width: 16px; height: 16px; margin-right: 6px; }
.tree li.off { color: #a09e9b; }
.tree li.bold { font-weight: bold; }
.tree li.child { padding-left: 63px; }
.tree li.sub { padding-left: 48px; }
.twist { width: 15px; height: 16px; display: flex; align-items: center; }
.twist::before { content: ""; border: 4px solid transparent; border-left: 7px solid #4e4e4c; border-right: 0; }
.twist.open::before { border: 4px solid transparent; border-top: 7px solid #4e4e4c; border-bottom: 0; }
.scroll { width: 13px; border: 1px solid #b1afab; border-radius: 7px; display: flex; flex-direction: column; align-items: center; background: #f4f3f1; }
.scroll i { flex: none; }
.up, .down { height: 12px; display: grid; place-items: center; }
.up::before { content: ""; border: 2px solid transparent; border-bottom: 3px solid #777; border-top: 0; }
.down::before { content: ""; border: 2px solid transparent; border-top: 3px solid #777; border-bottom: 0; }
.scroll .track { flex: 1; width: 11px; border-top: 1px solid #b1afab; border-radius: 5px 5px 0 0; background: #d9d7d4; }
.thumb { width: 13px; height: 59px; border: 1px solid #999792; border-radius: 6px; background: repeating-linear-gradient(#aaa 0 1px, transparent 1px 3px) center / 5px 7px no-repeat, linear-gradient(90deg, #fff, #e5e4e1); }
.splitter { flex: none; height: 6px; background: repeating-linear-gradient(90deg, #c8c7c4 0 1px, transparent 1px 3px) center / 8px 4px no-repeat; }
.props { width: 209px; height: 83px; padding: 1px; border: 1px solid #b9b7b3; border-radius: 3px; }
.props-body { height: 100%; border: 1px solid #c5c3bf; background: #fff; }
.props table { width: 100%; border-collapse: collapse; border-bottom: 1px solid #aaa8a4; background: linear-gradient(#fff, #efeeec); }
.props th { height: 24px; padding: 2px 4px; font-weight: normal; text-align: left; }
.props th:first-child { width: 100px; border-right: 1px solid #c5c3bf; }
.slant-tabs { height: 29px; display: flex; }
.slant-tabs button { position: relative; width: 50px; height: 28px; }
.slant-tabs .front { width: 48px; height: 29px; }
.slant-tabs svg { position: absolute; inset: 0; width: 100%; height: 100%; }
.slant-tabs span { position: relative; }
.combo { flex: 1; display: flex; flex-direction: column; }
.tabs { display: flex; align-items: flex-end; height: 29px; }
.tabs button { height: 26px; width: 59px; border: 1px solid #b9b7b3; border-bottom: 0; border-radius: 3px 3px 0 0; background: linear-gradient(#efeeec, #d9d7d4); }
.tabs .current { height: 30px; width: 51px; margin-bottom: -1px; padding-bottom: 2px; background: linear-gradient(#fff, #f4f3f1); }
.tasks { flex: 1; width: 209px; padding: 9px 9px 9px 10px; border: 1px solid #b9b7b3; border-radius: 0 3px 3px 3px; outline: 1px solid #e4e3e0; outline-offset: -2px; background: linear-gradient(#cac4c0, #c8c6c4 75%, #c8c6c4); }
.task-head { height: 25px; padding: 0 4px; display: flex; align-items: center; gap: 6px; background: linear-gradient(#f0753f, #f58a5d); color: #fff; font-weight: bold; }
.task-head button { margin-left: auto; }
.task-head button svg { width: 14px; height: 14px; }
.tasks ul { padding: 4px 6px; background: #f2f1ef; }
.tasks li { height: 23px; }
.tasks a { display: flex; align-items: flex-end; gap: 4px; height: 21px; color: #333; text-decoration: none; }
.tasks a svg { width: 16px; height: 16px; margin-bottom: 5px; }

.mdi { flex: 1; min-width: 0; display: flex; flex-direction: column; }
.view3d { position: relative; flex: 1; padding-top: 2px; display: grid; place-items: center; background: linear-gradient(#333366, #9898ac); }
.model { width: 303px; height: 101px; }
.axes { position: absolute; right: 0; bottom: 25px; width: 36px; height: 34px; font: 9px "DejaVu Sans", sans-serif; }
.mdi-tabs { flex: none; height: 33px; border-top: 1px solid #b9b2bb; }
.mdi-tab { width: 193px; height: 32px; padding: 0 11px 0 7px; display: flex; align-items: center; gap: 8px; border: 1px solid #b9b7b3; border-top: 0; border-radius: 0 0 4px 4px; background: #fbfbfa; white-space: nowrap; }
.mdi-tab button { margin-left: auto; }
.mdi-tab button svg { width: 12px; height: 12px; }
.doc-icon { width: 15px; height: 15px; }
.status { flex: none; height: 30px; padding: 5px 2px 0 0; border-top: 1px solid #d1d0cd; text-align: right; }
```
